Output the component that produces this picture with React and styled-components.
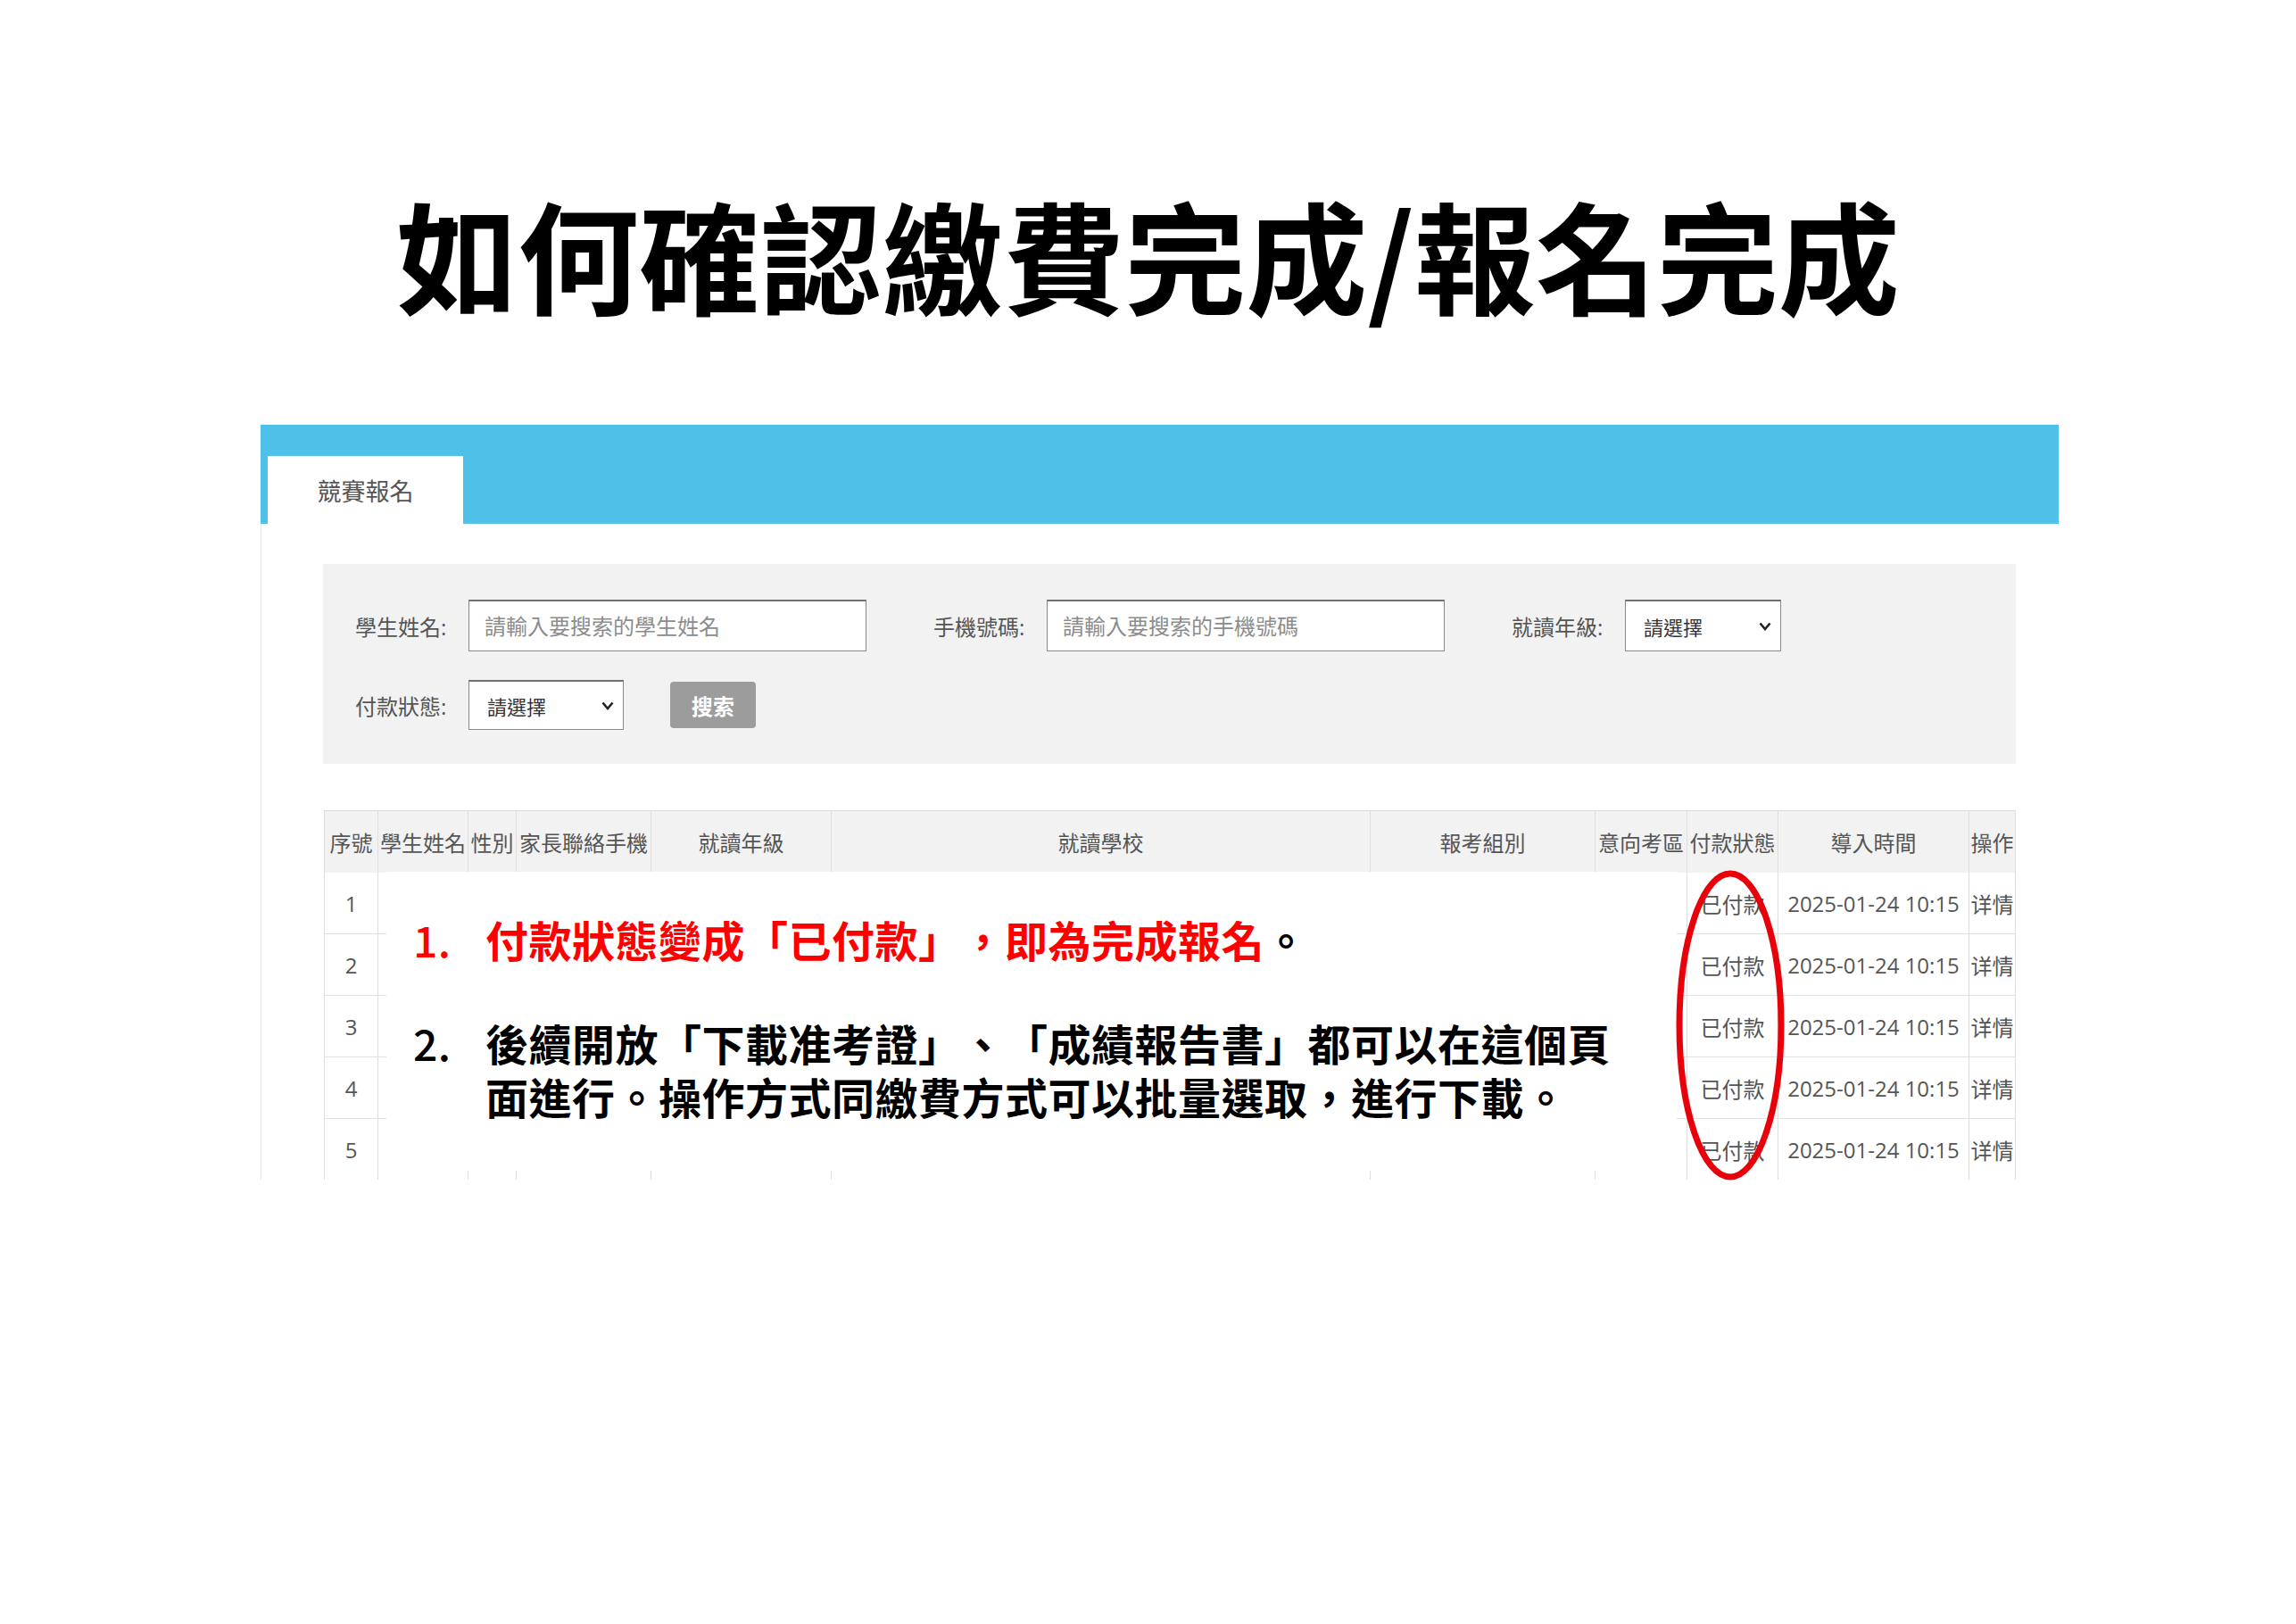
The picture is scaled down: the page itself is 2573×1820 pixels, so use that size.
import React from "react";
import styled, { createGlobalStyle } from "styled-components";

const UI_FONT = `"Open Sans", "Noto Sans CJK TC", sans-serif`;
const CJK_FONT = `"Noto Sans CJK TC", "Noto Sans CJK SC", sans-serif`;

const columns = [
  { key: "no", title: "序號", width: 61 },
  { key: "name", title: "學生姓名", width: 101 },
  { key: "sex", title: "性別", width: 54 },
  { key: "phone", title: "家長聯絡手機", width: 151 },
  { key: "grade", title: "就讀年級", width: 202 },
  { key: "school", title: "就讀學校", width: 604 },
  { key: "group", title: "報考組別", width: 252 },
  { key: "area", title: "意向考區", width: 103 },
  { key: "pay", title: "付款狀態", width: 102 },
  { key: "time", title: "導入時間", width: 214 },
  { key: "op", title: "操作", width: 52 },
];

const rows = [1, 2, 3, 4, 5].map((n) => ({
  no: n,
  pay: "已付款",
  time: "2025-01-24 10:15",
  op: "详情",
}));

const ChevronDown = () => (
  <svg width="14" height="10" viewBox="0 0 14 10">
    <path d="M1.5 1.5 L7 8 L12.5 1.5" fill="none" stroke="#222" strokeWidth="2.6" />
  </svg>
);

const App = () => {
  return (
    <>
      <GlobalStyle />
      <Page>
        <Title>如何確認繳費完成/報名完成</Title>

        <Shot>
          <TopBar>
            <Tab>競賽報名</Tab>
          </TopBar>

          <Body>
            <Filter>
              <FilterRow $gap={75}>
                <Field>
                  <Label>學生姓名:</Label>
                  <TextInput placeholder="請輸入要搜索的學生姓名" readOnly />
                </Field>
                <Field>
                  <Label>手機號碼:</Label>
                  <TextInput placeholder="請輸入要搜索的手機號碼" readOnly />
                </Field>
                <Field>
                  <Label>就讀年級:</Label>
                  <SelectBox $height={58}>
                    <span>請選擇</span>
                    <ChevronDown />
                  </SelectBox>
                </Field>
              </FilterRow>
              <FilterRow $gap={52}>
                <Field>
                  <Label>付款狀態:</Label>
                  <SelectBox $width={174} $height={56}>
                    <span>請選擇</span>
                    <ChevronDown />
                  </SelectBox>
                </Field>
                <SearchButton>搜索</SearchButton>
              </FilterRow>
            </Filter>

            <TableArea>
              <TableClip>
                <Table $cols={columns.map((c) => `${c.width}px`).join(" ")}>
                  {columns.map((c, i) => (
                    <HeadCell key={c.key} $first={i === 0}>
                      {c.title}
                    </HeadCell>
                  ))}
                  {rows.map((r) =>
                    columns.map((c, i) => (
                      <Cell key={`${r.no}-${c.key}`} $first={i === 0}>
                        {r[c.key] ?? ""}
                      </Cell>
                    ))
                  )}
                </Table>
              </TableClip>

              <Cover>
                <Note>
                  <NoteNo $red>1.</NoteNo>
                  <NoteText>
                    <Red>付款狀態變成「已付款」，即為完成報名</Red>。
                  </NoteText>
                </Note>
                <Note $gap={56}>
                  <NoteNo>2.</NoteNo>
                  <NoteText>
                    後續開放「下載准考證」、「成績報告書」都可以在這個頁面進行。操作方式同繳費方式可以批量選取，進行下載。
                  </NoteText>
                </Note>
              </Cover>

              <Ring width="122" height="350" viewBox="0 0 122 350">
                <ellipse cx="61" cy="174" rx="57" ry="170" fill="none" stroke="#e8000a" strokeWidth="7" />
              </Ring>
            </TableArea>
          </Body>
        </Shot>
      </Page>
    </>
  );
};

export default App;

// ===== styles =====
const GlobalStyle = createGlobalStyle`
  html, body { margin: 0; padding: 0; background: #fff; }
  * { box-sizing: border-box; }
`;

const Page = styled.div`
  width: 2573px;
  height: 1820px;
  overflow: hidden;
  background: #fff;
  padding-top: 216px;
`;

const Title = styled.h1`
  margin: 0;
  text-align: center;
  font-family: ${CJK_FONT};
  font-weight: 700;
  font-size: 136px;
  line-height: 136px;
  color: #000;
`;

const Shot = styled.div`
  margin: 124px 0 0 292px;
  width: 2015px;
  font-family: ${UI_FONT};
`;

const TopBar = styled.div`
  height: 111px;
  background: #4fc0e8;
  display: flex;
  align-items: flex-end;
  padding-left: 8px;
`;

const Tab = styled.div`
  width: 219px;
  height: 76px;
  background: #fff;
  display: flex;
  align-items: center;
  justify-content: center;
  font-size: 27px;
  color: #555;
`;

const Body = styled.div`
  height: 735px;
  border-left: 1px solid #e6e6e6;
  padding: 45px 0 0 69px;
`;

const Filter = styled.div`
  width: 1897px;
  background: #f2f2f2;
  padding: 40px 0 38px 36px;
  display: flex;
  flex-direction: column;
  gap: 32px;
`;

const FilterRow = styled.div`
  display: flex;
  align-items: center;
  gap: ${(p) => p.$gap}px;
`;

const Field = styled.div`
  display: flex;
  align-items: center;
`;

const Label = styled.span`
  width: 127px;
  font-size: 24px;
  color: #555;
  white-space: nowrap;
`;

const TextInput = styled.input`
  width: 446px;
  height: 58px;
  border: 1px solid #8a8a8a;
  border-top: 2px solid #707070;
  background: #fff;
  padding: 0 0 0 17px;
  font-family: ${UI_FONT};
  font-size: 24px;
  outline: none;
  &::placeholder { color: #8c8c8c; }
`;

const SelectBox = styled.div`
  width: ${(p) => p.$width || 175}px;
  height: ${(p) => p.$height}px;
  border: 1px solid #8a8a8a;
  border-top: 2px solid #707070;
  background: #fff;
  display: flex;
  align-items: center;
  justify-content: space-between;
  padding: 0 10px 0 20px;
  font-size: 22px;
  color: #333;
`;

const SearchButton = styled.button`
  width: 96px;
  height: 52px;
  border: none;
  border-radius: 4px;
  background: #9c9c9c;
  color: #fff;
  font-family: ${UI_FONT};
  font-size: 24px;
  font-weight: 600;
`;

const TableArea = styled.div`
  position: relative;
  margin: 52px 0 0 1px;
  width: 1896px;
`;

const TableClip = styled.div`
  height: 414px;
  overflow: hidden;
`;

const Table = styled.div`
  display: grid;
  grid-template-columns: ${(p) => p.$cols};
  grid-auto-rows: 69px;
  border-top: 1px solid #dcdcdc;
`;

const Cell = styled.div`
  display: flex;
  align-items: center;
  justify-content: center;
  border-right: 1px solid #dedede;
  border-bottom: 1px solid #e2e2e2;
  border-left: ${(p) => (p.$first ? "1px solid #dedede" : "none")};
  font-size: 24px;
  color: #555;
  white-space: nowrap;
  overflow: hidden;
`;

const HeadCell = styled(Cell)`
  background: #f2f2f2;
  border-bottom: none;
`;

const Cover = styled.div`
  position: absolute;
  left: 70px;
  top: 69px;
  width: 1446px;
  height: 335px;
  background: #fff;
  padding: 45px 0 0 30px;
  font-family: ${CJK_FONT};
  font-weight: 700;
  font-size: 48px;
  line-height: 60px;
  letter-spacing: 0.5px;
  text-spacing-trim: space-all;
  color: #000;
`;

const Note = styled.div`
  display: grid;
  grid-template-columns: 81px 1290px;
  margin-top: ${(p) => p.$gap || 0}px;
`;

const NoteNo = styled.span`
  color: ${(p) => (p.$red ? "#ff0000" : "#000")};
  font-weight: 500;
`;

const NoteText = styled.span``;

const Red = styled.span`
  color: #ff0000;
`;

const Ring = styled.svg`
  position: absolute;
  left: 1515px;
  top: 67px;
`;
